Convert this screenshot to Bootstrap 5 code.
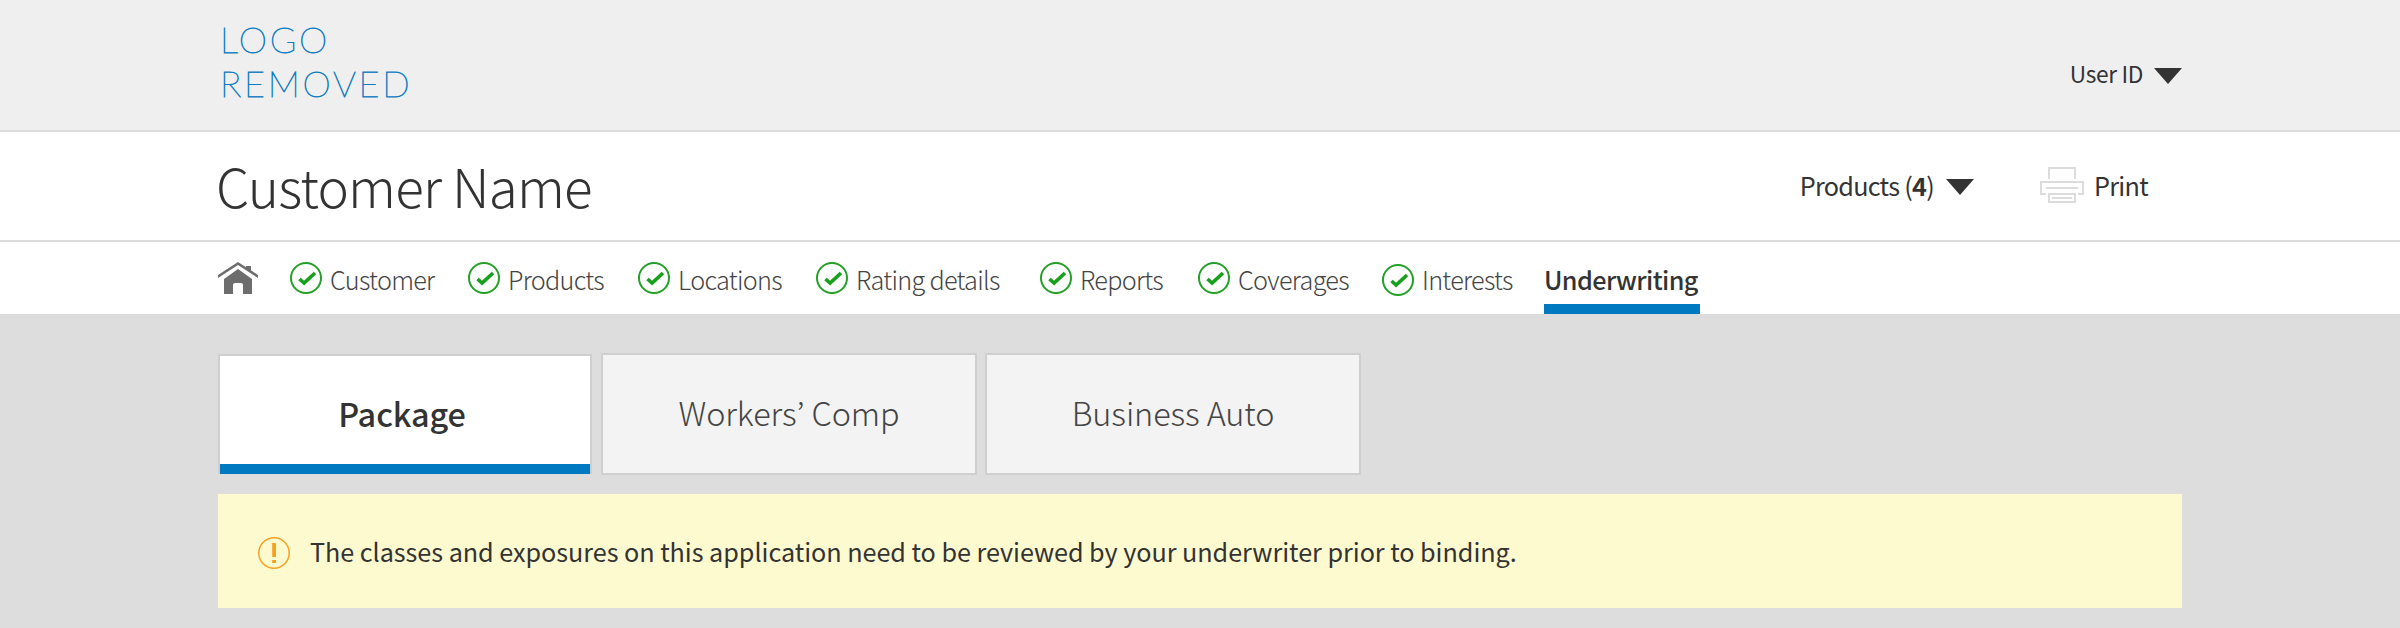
<!DOCTYPE html>
<html lang="en">
<head>
<meta charset="utf-8">
<meta name="viewport" content="width=device-width, initial-scale=1">
<title>Customer Name – Underwriting</title>
<link href="https://cdn.jsdelivr.net/npm/bootstrap@5.3.0/dist/css/bootstrap.min.css" rel="stylesheet">
<style>
  body { background: #ddd; color: #333; font-family: "Noto Sans CJK KR", "Noto Sans", sans-serif; font-size: 25.2px; line-height: 36px; overflow: hidden; white-space: nowrap; }
  a, a:hover { color: inherit; text-decoration: none; }
  svg { display: block; flex: none; }
  .page-wrap { width: 1964px; margin: 0 auto; }
  .top-bar { height: 132px; background: #efefef; border-bottom: 2px solid #dcdcdc; }
  .brand-text { font: 100 36px/44px Lato, sans-serif; letter-spacing: 2.7px; color: #0f7cc4; -webkit-text-stroke: .8px #0f7cc4; padding: 17px 0 0 2px; }
  .user-menu { font-size: 22.7px; letter-spacing: -.35px; gap: 11px; padding-top: 56px; }
  .title-bar { height: 110px; border-bottom: 2px solid #dcdcdc; padding-bottom: 2px; }
  .title-bar h1 { font-size: 53px; font-weight: 300; line-height: 60px; letter-spacing: -.8px; margin: 0 0 0 -2px; }
  .title-actions { letter-spacing: -.7px; padding-right: 34px; }
  .steps { display: grid; grid-template-columns: 72px 178px 170px 178px 224px 158px 184px 162px 156px; height: 72px; font-weight: 300; letter-spacing: -.7px; }
  .steps a { display: flex; align-items: center; gap: 8px; color: #444; }
  .steps a span { padding-top: 2px; }
  .steps .current { font-weight: 500; color: #333; letter-spacing: -.6px; border-bottom: 10px solid #0079c1; padding-top: 10px; }
  .product-tabs { padding-top: 39px; height: 180px; font-size: 32.4px; font-weight: 300; letter-spacing: -.1px; }
  .product-tabs a { height: 122px; border: 2px solid #cfcfcf; background: #f3f3f3; color: #444; display: flex; align-items: center; justify-content: center; padding-bottom: 4px; }
  .product-tabs .current { width: 374px; height: 120px; margin: 1px 9px 0 0; background: #fff; color: #333; border-bottom: 0; font-weight: 500; box-shadow: inset 0 -10px #0079c1; padding: 0 6px 4px 0; }
  .notice { height: 114px; background: #fefad0; color: #333; border: 0; border-radius: 0; padding: 0 40px; margin: 0; gap: 20px; letter-spacing: -.04px; }
</style>
</head>
<body>
<svg width="0" height="0" class="position-absolute">
  <symbol id="done" viewBox="0 0 32 32"><circle cx="16" cy="16" r="15" fill="none" stroke="#23a127" stroke-width="2"/><path d="M9.5 17l4.6 4L25 11" fill="none" stroke="#17a01b" stroke-width="3.6"/></symbol>
  <symbol id="caret" viewBox="0 0 28 16"><path d="M0 0h28L14 16z" fill="#333"/></symbol>
</svg>

<header class="top-bar">
  <div class="page-wrap d-flex justify-content-between align-items-start">
    <div class="brand-text">LOGO<br>REMOVED</div>
    <a href="#" class="user-menu d-flex align-items-center">User ID <svg width="28" height="16" class="mt-1"><use href="#caret"/></svg></a>
  </div>
</header>

<section class="title-bar bg-white">
  <div class="page-wrap h-100 d-flex justify-content-between align-items-center">
    <h1>Customer Name</h1>
    <div class="title-actions d-flex align-items-center">
      <a href="#" class="d-flex align-items-center">Products (<span class="fw-bold">4</span>) <svg width="28" height="16" class="mt-1" style="margin-left:12px"><use href="#caret"/></svg></a>
      <a href="#" class="d-flex align-items-center" style="margin-left:66px">
        <svg width="44" height="36" viewBox="0 0 44 36" fill="none" stroke="#dcdcdc" stroke-width="2" style="margin-right:10px"><path d="M9 12V1h26v11M6 27H1V15h42v12h-5M6 21h32M9 27h26v8H9zM12 31h20"/></svg>Print</a>
    </div>
  </div>
</section>

<div class="bg-white">
  <nav class="steps page-wrap">
    <a href="#" aria-label="Home"><svg width="40" height="32" viewBox="0 0 40 32" fill="#6d6d6d"><path d="M20 0L0 13v3L20 3l20 13v-3l-7-4.7V4h-5v1.2z"/><path d="M6 32V17L20 7l14 10v15h-9V23q0-2-2-2h-6q-2 0-2 2v9z"/></svg></a>
    <a href="#"><svg width="32" height="32"><use href="#done"/></svg><span>Customer</span></a>
    <a href="#"><svg width="32" height="32"><use href="#done"/></svg><span>Products</span></a>
    <a href="#"><svg width="32" height="32"><use href="#done"/></svg><span>Locations</span></a>
    <a href="#"><svg width="32" height="32"><use href="#done"/></svg><span>Rating details</span></a>
    <a href="#"><svg width="32" height="32"><use href="#done"/></svg><span>Reports</span></a>
    <a href="#"><svg width="32" height="32"><use href="#done"/></svg><span>Coverages</span></a>
    <a href="#"><svg width="32" height="32" class="mt-1"><use href="#done"/></svg><span>Interests</span></a>
    <a href="#" class="current"><span>Underwriting</span></a>
  </nav>
</div>

<main class="page-wrap">
  <nav class="product-tabs d-flex align-items-start">
    <a href="#" class="current">Package</a>
    <a href="#" style="width:376px;margin-right:8px">Workers’ Comp</a>
    <a href="#" style="width:376px">Business Auto</a>
  </nav>
  <div class="notice alert d-flex align-items-center" role="alert">
    <svg width="32" height="32" viewBox="0 0 32 32" fill="#f7a01f" class="mt-1"><circle cx="16" cy="16" r="15.2" fill="none" stroke="#f7a01f" stroke-width="1.5"/><path d="M14.2 6h3.8v14h-3.8zM14.2 23h3.8v3h-3.8z"/></svg>
    <span>The classes and exposures on this application need to be reviewed by your underwriter prior to binding.</span>
  </div>
</main>
<script src="https://cdn.jsdelivr.net/npm/bootstrap@5.3.0/dist/js/bootstrap.bundle.min.js"></script>
</body>
</html>
